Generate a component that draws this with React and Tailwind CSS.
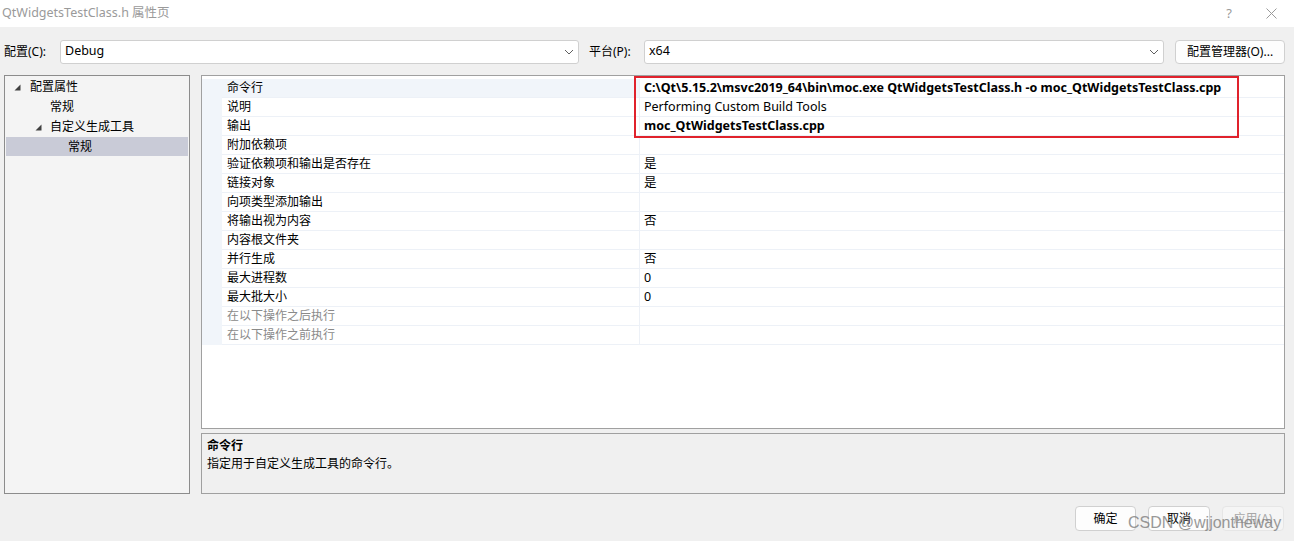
import React from "react";

const FONT = { fontFamily: '"Noto Sans", "Noto Sans CJK SC", sans-serif' };

function Chevron() {
  return (
    <svg width="10" height="6" viewBox="0 0 10 6" className="shrink-0">
      <path d="M1 1 L5 5 L9 1" fill="none" stroke="#606060" strokeWidth="1" />
    </svg>
  );
}

function Tri() {
  return (
    <svg width="7" height="7" viewBox="0 0 7 7" className="shrink-0">
      <path d="M6.5 0.5 L6.5 6.5 L0.5 6.5 Z" fill="#404040" />
    </svg>
  );
}

function Combo({ value, width }) {
  return (
    <div
      className={`h-[24px] bg-white border border-[#d0d0d0] rounded-[3px] flex items-center justify-between pl-[4px] pr-[4px] ${width}`}
    >
      <span className="text-[12.5px] text-black">{value}</span>
      <Chevron />
    </div>
  );
}

const rows = [
  { n: "命令行", v: "C:\\Qt\\5.15.2\\msvc2019_64\\bin\\moc.exe QtWidgetsTestClass.h -o moc_QtWidgetsTestClass.cpp", b: true, sel: true },
  { n: "说明", v: "Performing Custom Build Tools" },
  { n: "输出", v: "moc_QtWidgetsTestClass.cpp", b: true },
  { n: "附加依赖项", v: "" },
  { n: "验证依赖项和输出是否存在", v: "是" },
  { n: "链接对象", v: "是" },
  { n: "向项类型添加输出", v: "" },
  { n: "将输出视为内容", v: "否" },
  { n: "内容根文件夹", v: "" },
  { n: "并行生成", v: "否" },
  { n: "最大进程数", v: "0" },
  { n: "最大批大小", v: "0" },
  { n: "在以下操作之后执行", v: "", g: true },
  { n: "在以下操作之前执行", v: "", g: true },
];

export default function App() {
  return (
    <div className="w-[1294px] h-[541px] bg-[#f0f0f0] flex flex-col overflow-hidden relative" style={FONT}>
      {/* Title bar */}
      <div className="h-[27px] bg-white flex items-center justify-between shrink-0">
        <span className="pl-[2px] text-[12.5px] text-[#9a9a9a]">QtWidgetsTestClass.h 属性页</span>
        <div className="flex items-center gap-[34px] pr-[17px]">
          <span className="text-[13px] text-[#9a9a9a]">?</span>
          <svg width="11" height="11" viewBox="0 0 11 11">
            <path d="M0.5 0.5 L10.5 10.5 M10.5 0.5 L0.5 10.5" stroke="#9a9a9a" strokeWidth="1" />
          </svg>
        </div>
      </div>

      {/* Config row */}
      <div className="flex items-center mt-[12px] h-[24px] shrink-0 pt-[1px]">
        <span className="pl-[4px] w-[60px] text-[12px] text-black">配置(C):</span>
        <Combo value="Debug" width="w-[519px]" />
        <span className="pl-[10px] w-[65px] text-[12px] text-black">平台(P):</span>
        <Combo value="x64" width="w-[520px]" />
        <div className="ml-[11px] w-[110px] h-[24px] bg-[#fdfdfd] border border-[#d0d0d0] rounded-[4px] flex items-center justify-center text-[12px] text-black">
          配置管理器(O)...
        </div>
      </div>

      {/* Main */}
      <div className="flex mt-[12px] h-[419px] shrink-0">
        {/* Tree */}
        <div className="ml-[4px] w-[186px] border border-[#8c8c8c] bg-[#f4f4f4] pt-[1px] px-[1px]">
          <div className="h-[20px] flex items-center pl-[8px] gap-[9px] text-[12px] text-black">
            <Tri />
            <span>配置属性</span>
          </div>
          <div className="h-[20px] flex items-center pl-[44px] text-[12px] text-black">常规</div>
          <div className="h-[20px] flex items-center pl-[29px] gap-[8px] text-[12px] text-black">
            <Tri />
            <span>自定义生成工具</span>
          </div>
          <div className="h-[19px] flex items-center pl-[62px] text-[12px] text-black bg-[#c9cbd7]">常规</div>
        </div>

        {/* Right column */}
        <div className="ml-[11px] w-[1084px] flex flex-col gap-[4px]">
          <div className="relative h-[355px] bg-white border border-[#a0a0a0] pt-[3px]">
            {rows.map((r, i) => (
              <div key={i} className="h-[19px] flex">
                <div className="w-[20px] bg-[#f1f5fa] shrink-0" />
                <div
                  className={`w-[418px] shrink-0 border-b border-r border-[#edf1f7] flex items-center pl-[5px] text-[12px] ${
                    r.g ? "text-[#8a8a8a]" : "text-black"
                  } ${r.sel ? "bg-[#f1f5fa]" : ""}`}
                >
                  {r.n}
                </div>
                <div
                  className={`flex-1 border-b border-[#edf1f7] flex items-center pl-[4px] text-[12.5px] text-black whitespace-nowrap ${
                    r.b ? "font-bold" : ""
                  }`}
                >
                  {r.v}
                </div>
              </div>
            ))}
            <div className="absolute left-[432px] top-[0px] w-[605px] h-[62px] border-2 border-[#e0222c]" />
          </div>
          <div className="h-[61px] bg-[#f0f0f0] border border-[#a0a0a0] px-[5px] pt-[3px]">
            <div className="text-[12px] font-bold text-black leading-[18px]">命令行</div>
            <div className="text-[12px] text-black leading-[18px]">指定用于自定义生成工具的命令行。</div>
          </div>
        </div>
      </div>

      {/* Buttons */}
      <div className="flex justify-end items-center mt-[12px] pr-[10px] gap-[12px]">
        <div className="w-[61px] h-[25px] bg-[#fdfdfd] border border-[#d0d0d0] rounded-[4px] flex items-center justify-center text-[12px] text-black">确定</div>
        <div className="w-[62px] h-[25px] bg-[#fdfdfd] border border-[#d0d0d0] rounded-[4px] flex items-center justify-center text-[12px] text-black">取消</div>
        <div className="w-[62px] h-[25px] bg-[#f5f5f5] border border-[#e6e6e6] rounded-[4px] flex items-center justify-center text-[12px] text-[#a8a8a8]">应用(A)</div>
      </div>

      {/* Watermark */}
      <div
        className="absolute left-[1128px] top-[511px] text-[16px] text-[#808080] opacity-80 whitespace-nowrap"
        style={{ fontFamily: '"Liberation Sans", sans-serif' }}
      >
        CSDN @wjjontheway
      </div>
    </div>
  );
}
